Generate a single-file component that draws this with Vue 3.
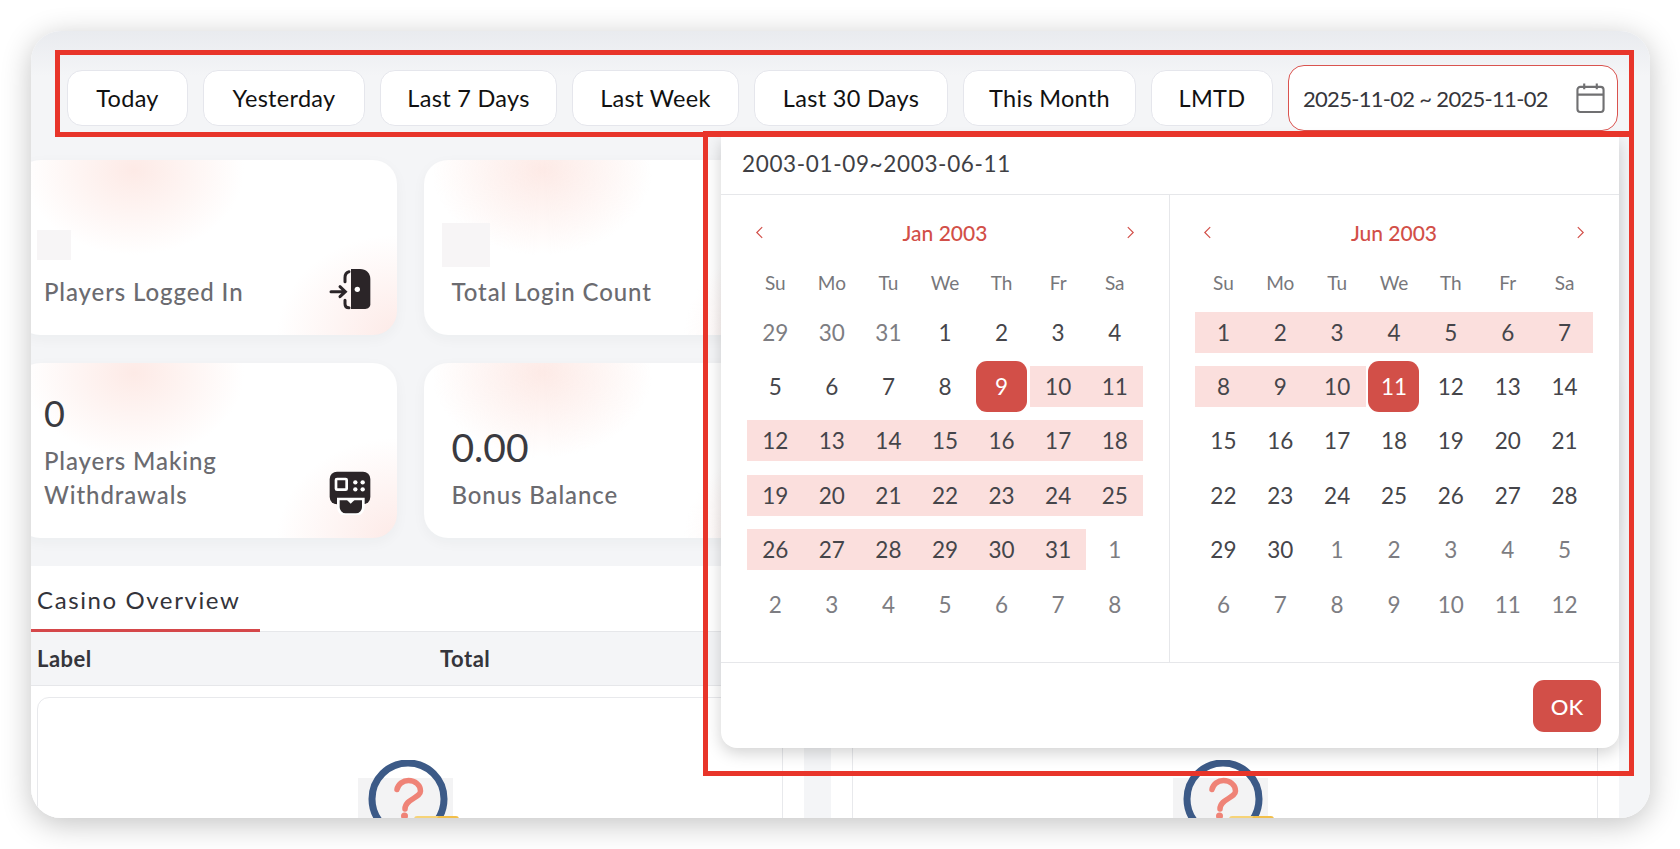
<script setup>
const presets = ['Today', 'Yesterday', 'Last 7 Days', 'Last Week', 'Last 30 Days', 'This Month', 'LMTD']
const weekdays = ['Su', 'Mo', 'Tu', 'We', 'Th', 'Fr', 'Sa']
const monthNames = ['Jan', 'Feb', 'Mar', 'Apr', 'May', 'Jun', 'Jul', 'Aug', 'Sep', 'Oct', 'Nov', 'Dec']

const rangeStart = new Date(2003, 0, 9).getTime()
const rangeEnd = new Date(2003, 5, 11).getTime()

function buildMonth(year, month) {
  const first = new Date(year, month, 1)
  const days = []
  for (let i = 0; i < 42; i++) {
    const d = new Date(year, month, 1 - first.getDay() + i)
    const t = d.getTime()
    const current = d.getMonth() === month
    days.push({
      key: t,
      label: d.getDate(),
      muted: !current,
      selected: current && (t === rangeStart || t === rangeEnd),
      inRange: current && t > rangeStart && t < rangeEnd,
    })
  }
  return { title: `${monthNames[month]} ${year}`, days }
}

const months = [buildMonth(2003, 0), buildMonth(2003, 5)]
</script>

<template>
  <div class="page">
    <div class="window">
      <div class="toolbar">
        <button v-for="p in presets" :key="p" class="preset">{{ p }}</button>
        <div class="date-input">
          <span>2025-11-02 ~ 2025-11-02</span>
          <svg class="cal-icon" viewBox="0 0 30 32" fill="none" stroke="#707072" stroke-width="2.2">
            <rect x="1.5" y="4.5" width="27" height="26" rx="3" />
            <path d="M1.5 12.5H28.5M8.5 1V7M21.5 1V7" />
          </svg>
        </div>
      </div>

      <div class="content">
        <div class="cards">
          <div class="card">
            <div class="card-text">
              <div class="ghost ghost-sm"></div>
              <div class="card-label">Players Logged In</div>
            </div>
            <svg class="card-icon" viewBox="80 75 135 135">
              <path fill="#2b2528" d="M149 84H176C194 84 207 96 207 114V190C207 198 200 204 192 204H149Z" />
              <circle cx="168" cy="145" r="8" fill="#fff" />
              <path fill="none" stroke="#2b2528" stroke-width="9" stroke-linecap="round" d="M143 92C134 94 131 100 131 110V122M131 178V188C131 196 135 200 143 200M89 152H130M116 137L132 152L116 167" />
            </svg>
          </div>
          <div class="card">
            <div class="card-text">
              <div class="ghost ghost-lg"></div>
              <div class="card-label">Total Login Count</div>
            </div>
          </div>
          <div class="card"></div>
          <div class="card"></div>
          <div class="card">
            <div class="card-text">
              <div class="card-value">0</div>
              <div class="card-label">Players Making<br />Withdrawals</div>
            </div>
            <svg class="card-icon qr" viewBox="80 85 135 135">
              <rect x="85" y="90" width="122" height="98" rx="22" fill="#2b2528" />
              <rect x="104" y="112" width="32" height="32" rx="3" fill="#2b2528" stroke="#fff" stroke-width="8" />
              <circle cx="162" cy="122" r="6.5" fill="#fff" />
              <circle cx="184" cy="122" r="6.5" fill="#fff" />
              <circle cx="162" cy="143" r="6.5" fill="#fff" />
              <circle cx="184" cy="143" r="6.5" fill="#fff" />
              <path fill="#2b2528" stroke="#fff" stroke-width="8" d="M111 172H186V196C186 208 176 219 164 219H133C121 219 111 208 111 196Z" />
              <path fill="#fff" d="M132 170H165L148 186Z" />
            </svg>
          </div>
          <div class="card">
            <div class="card-text">
              <div class="card-value big">0.00</div>
              <div class="card-label">Bonus Balance</div>
            </div>
          </div>
          <div class="card"></div>
          <div class="card"></div>
        </div>

        <div class="sections">
          <section class="section">
            <div class="tab-row">
              <div class="tab">Casino Overview</div>
            </div>
            <div class="table-head">
              <span class="col">Label</span>
              <span class="col">Total</span>
            </div>
            <div class="empty">
              <svg class="empty-icon" viewBox="0 0 105 90">
                <rect x="0" y="18" width="95" height="72" fill="#f3f3f4" />
                <circle cx="50" cy="39" r="36" fill="none" stroke="#3c5a87" stroke-width="7" />
                <path fill="none" stroke="#ef8377" stroke-width="5.5" stroke-linecap="round" d="M39 29.5C40 24 45 20.5 50.5 20.5C57 20.5 62.5 25 62.5 31C62.5 38 47 39 47 49" />
                <circle cx="46.5" cy="56" r="3.5" fill="#ef8377" />
                <rect x="56" y="56" width="27" height="20" rx="3" fill="#f6d378" />
                <rect x="79" y="56" width="22" height="20" rx="3" fill="#f2bf4a" />
              </svg>
            </div>
          </section>
          <section class="section">
            <div class="tab-row"></div>
            <div class="table-head"></div>
            <div class="empty">
              <svg class="empty-icon" viewBox="0 0 105 90">
                <rect x="0" y="18" width="95" height="72" fill="#f3f3f4" />
                <circle cx="50" cy="39" r="36" fill="none" stroke="#3c5a87" stroke-width="7" />
                <path fill="none" stroke="#ef8377" stroke-width="5.5" stroke-linecap="round" d="M39 29.5C40 24 45 20.5 50.5 20.5C57 20.5 62.5 25 62.5 31C62.5 38 47 39 47 49" />
                <circle cx="46.5" cy="56" r="3.5" fill="#ef8377" />
                <rect x="56" y="56" width="27" height="20" rx="3" fill="#f6d378" />
                <rect x="79" y="56" width="22" height="20" rx="3" fill="#f2bf4a" />
              </svg>
            </div>
          </section>
        </div>
      </div>

      <div class="picker">
        <div class="picker-head">2003-01-09~2003-06-11</div>
        <div class="picker-body">
          <div v-for="m in months" :key="m.title" class="panel">
            <div class="panel-title">
              <svg class="chev" viewBox="0 0 10 16"><path d="M8 2L2 8L8 14" /></svg>
              <span>{{ m.title }}</span>
              <svg class="chev" viewBox="0 0 10 16"><path d="M2 2L8 8L2 14" /></svg>
            </div>
            <div class="weekdays">
              <span v-for="w in weekdays" :key="w">{{ w }}</span>
            </div>
            <div class="days">
              <div
                v-for="d in m.days"
                :key="d.key"
                class="day"
                :class="{ muted: d.muted, 'in-range': d.inRange, selected: d.selected }"
              >
                <span>{{ d.label }}</span>
              </div>
            </div>
          </div>
        </div>
        <div class="picker-foot">
          <button class="ok">OK</button>
        </div>
      </div>

      <div class="mark mark-bar"></div>
      <div class="mark mark-picker"></div>
    </div>
  </div>
</template>

<style>
body {
  background: #fff;
}
</style>

<style scoped>
.page {
  width: 1680px;
  height: 849px;
  padding: 31px 30px 31px 31px;
  box-sizing: border-box;
  overflow: hidden;
  font-family: Lato, "Liberation Sans", sans-serif;
}
.window {
  position: relative;
  height: 787px;
  border-radius: 30px;
  overflow: hidden;
  background: linear-gradient(#e9ebef, #f4f5f7 45px);
  box-shadow: 0 6px 30px rgba(0, 0, 0, 0.24);
}
.toolbar {
  display: grid;
  grid-template-columns: 121px 162px 177px 167px 194px 173px 122px 1fr;
  align-items: center;
  gap: 15px;
  height: 66px;
  padding: 34px 32px 0 36px;
}
.preset {
  height: 56px;
  padding: 0;
  background: #fff;
  border: 1px solid #e5e6ec;
  border-radius: 15px;
  color: #111;
  font: 400 23.5px Lato, sans-serif;
  letter-spacing: 0.3px;
  white-space: nowrap;
}
.date-input {
  height: 66px;
  box-sizing: border-box;
  display: flex;
  align-items: center;
  justify-content: space-between;
  padding: 0 12px 0 14px;
  background: #fff;
  border: 1px solid #d9534f;
  border-radius: 16px;
  color: #36363b;
  font-size: 22px;
  letter-spacing: -0.7px;
}
.cal-icon {
  width: 29px;
  height: 32px;
}
.content {
  margin: 29px 31px 0 -15px;
}
.cards {
  display: grid;
  grid-template-columns: repeat(4, 1fr);
  gap: 28px 27px;
}
.card {
  display: flex;
  justify-content: space-between;
  align-items: flex-end;
  height: 175px;
  box-sizing: border-box;
  padding: 0 24px 26px 28px;
  border-radius: 24px;
  background:
    radial-gradient(ellipse 110px 85px at 118px 10px, #fdeae6, rgba(253, 234, 230, 0)),
    radial-gradient(ellipse 120px 100px at 100% 100%, #fdeae7, rgba(253, 234, 231, 0)),
    #fff;
  box-shadow: 0 4px 14px rgba(30, 40, 60, 0.04);
}
.card-value {
  margin-bottom: 7px;
  color: #3a3a40;
  font-size: 36px;
  line-height: 48px;
}
.card-value.big {
  font-size: 39px;
}
.card-label {
  color: #6b6b70;
  font-size: 24px;
  font-weight: 500;
  line-height: 34px;
  letter-spacing: 0.9px;
}
.ghost {
  background: #f7f5f6;
}
.ghost-sm {
  width: 34px;
  height: 30px;
  margin: 0 0 15px -7px;
}
.ghost-lg {
  width: 48px;
  height: 44px;
  margin: 0 0 8px -10px;
}
.card-icon {
  flex: none;
  width: 45px;
  height: 45px;
  margin-bottom: -2px;
}
.card-icon.qr {
  margin-bottom: -3px;
}
.sections {
  display: grid;
  grid-template-columns: repeat(2, 1fr);
  gap: 27px;
  margin-top: 28px;
}
.section {
  background: #fff;
  height: 260px;
  overflow: hidden;
}
.tab-row {
  height: 66px;
  box-sizing: border-box;
  border-bottom: 1px solid #e6e7ea;
}
.tab {
  display: flex;
  align-items: center;
  width: 244px;
  height: 66px;
  box-sizing: border-box;
  padding: 4px 0 0 21px;
  border-bottom: 3px solid #d5474a;
  color: #33333a;
  font-size: 24px;
  letter-spacing: 1.6px;
}
.table-head {
  display: flex;
  align-items: center;
  height: 54px;
  box-sizing: border-box;
  padding: 0 21px;
  background: #f4f5f7;
  border-bottom: 1px solid #e6e7ea;
  color: #35353b;
  font-size: 22px;
  font-weight: 700;
  letter-spacing: 0.5px;
}
.col {
  flex: none;
  width: 403px;
}
.empty {
  height: 200px;
  margin: 11px 21px 0;
  padding-top: 62px;
  box-sizing: border-box;
  display: flex;
  justify-content: center;
  border: 1px solid #e8e9ec;
  border-radius: 12px;
}
.empty-icon {
  width: 105px;
  height: 90px;
}
.picker {
  position: absolute;
  top: 106px;
  left: 690px;
  width: 898px;
  height: 611px;
  display: flex;
  flex-direction: column;
  background: #fff;
  border-radius: 0 0 16px 16px;
  box-shadow: 0 5px 16px rgba(0, 0, 0, 0.18);
}
.picker-head {
  height: 58px;
  flex: none;
  box-sizing: border-box;
  padding: 0 0 5px 21px;
  display: flex;
  align-items: center;
  border-bottom: 1px solid #e6e7ea;
  color: #3f3f44;
  font-size: 22.5px;
  letter-spacing: 0.65px;
}
.picker-body {
  display: grid;
  grid-template-columns: 448px 450px;
  height: 467px;
  flex: none;
}
.panel {
  padding: 17px 26px 0;
  box-sizing: border-box;
}
.panel + .panel {
  border-left: 1px solid #e6e7ea;
  padding: 17px 26px 0 25px;
}
.panel-title {
  display: flex;
  align-items: center;
  justify-content: space-between;
  height: 40px;
  margin-bottom: 8px;
  padding: 0 8px;
  color: #d24f48;
  font-size: 21px;
  font-weight: 500;
}
.chev {
  width: 9px;
  height: 15px;
  fill: none;
  stroke: #d24f48;
  stroke-width: 1.3;
}
.weekdays {
  display: grid;
  grid-template-columns: repeat(7, 1fr);
  height: 44px;
  align-items: center;
  text-align: center;
  color: #77777b;
  font-size: 19px;
}
.days {
  display: grid;
  grid-template-columns: repeat(7, 1fr);
  grid-auto-rows: 41px;
  row-gap: 13.4px;
  padding-top: 7.7px;
  color: #45454a;
  font-size: 22.5px;
}
.day {
  display: flex;
  align-items: center;
  justify-content: center;
}
.day.muted {
  color: #7d7d82;
}
.day.in-range {
  background: #fbdfdd;
}
.day.selected span {
  flex: none;
  display: flex;
  align-items: center;
  justify-content: center;
  width: 51px;
  height: 51px;
  border-radius: 11px;
  background: #d24f48;
  color: #fff;
}
.picker-foot {
  flex: 1;
  display: flex;
  justify-content: flex-end;
  padding: 17px 18px 0 0;
  border-top: 1px solid #e6e7ea;
}
.ok {
  width: 68px;
  height: 52px;
  border: none;
  border-radius: 11px;
  background: #d24f48;
  color: #fff;
  font: 500 22px Lato, sans-serif;
}
.mark {
  position: absolute;
  box-sizing: border-box;
  border: 5px solid #e8352a;
  pointer-events: none;
}
.mark-bar {
  top: 19px;
  left: 24px;
  width: 1579px;
  height: 87px;
}
.mark-picker {
  top: 100px;
  left: 672px;
  width: 931px;
  height: 645px;
}
</style>
